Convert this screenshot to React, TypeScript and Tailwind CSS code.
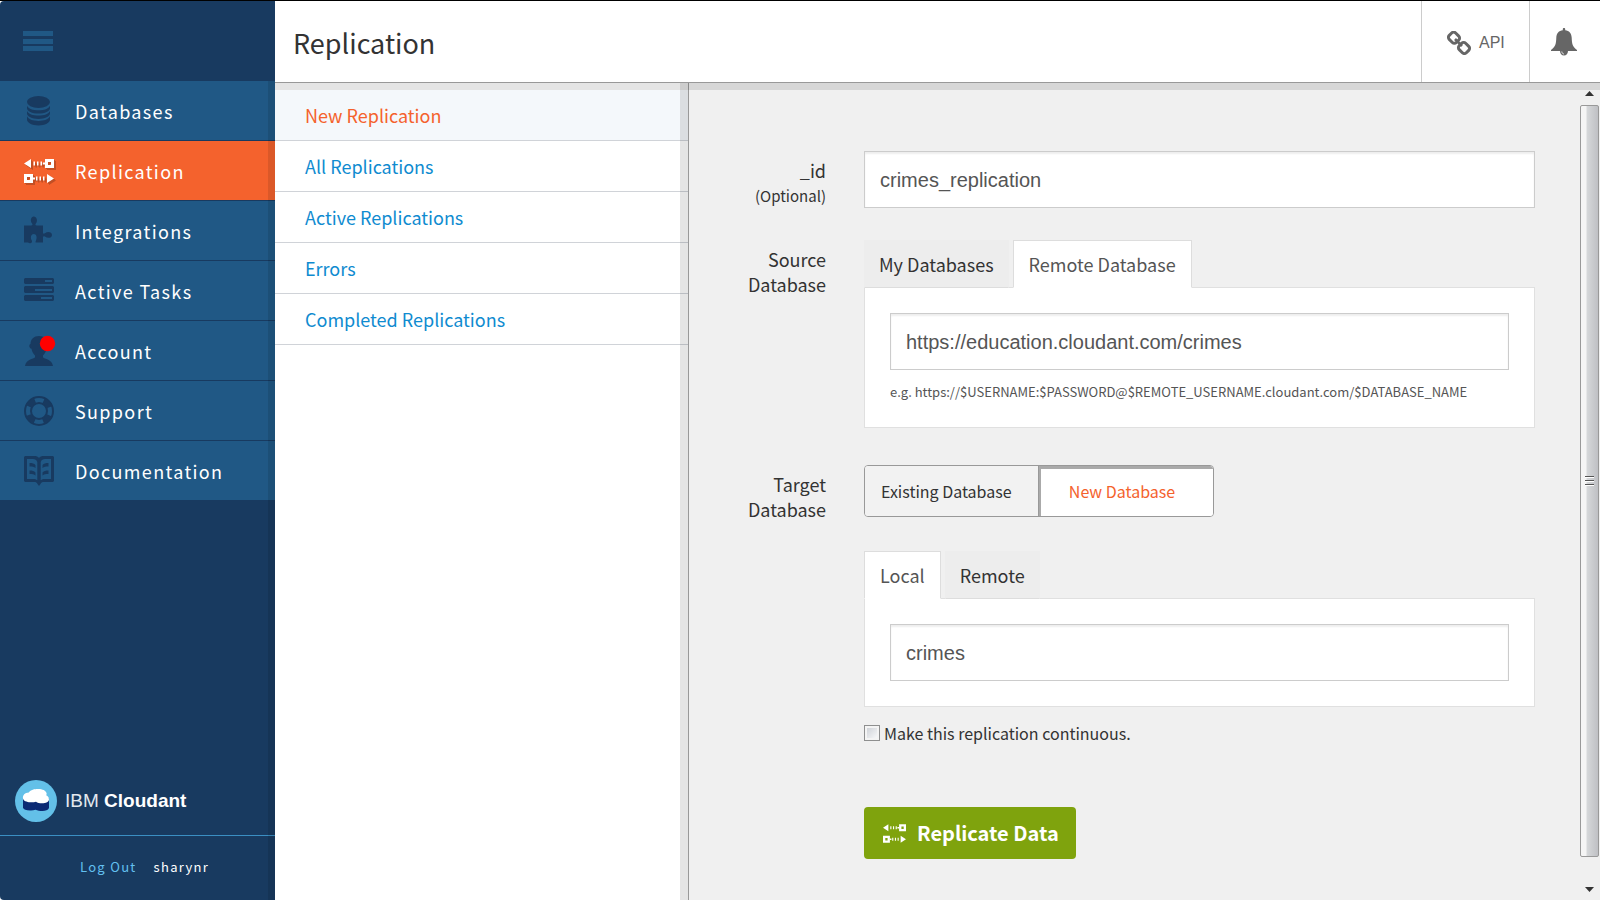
import { useState } from 'react';
import type { ReactNode } from 'react';

const inputClass =
  'block h-[57px] w-full border border-[#ccc] bg-white px-[15px] pt-[2px] font-["Liberation_Sans",sans-serif] text-[20px] text-[#555] shadow-[inset_0_2px_2px_rgba(0,0,0,0.07)] outline-none';

function MenuIcon() {
  return (
    <svg width="30" height="20" viewBox="0 0 30 20" fill="#205885" aria-hidden="true">
      <path d="M0 0h30v5H0zM0 8h30v5H0zM0 15h30v5H0z" />
    </svg>
  );
}

function DatabaseIcon() {
  return (
    <svg width="32" height="32" viewBox="0 0 32 32" fill="#183a60" aria-hidden="true">
      <ellipse cx="14.500" cy="7" rx="11.500" ry="6.100" />
      <path d="M3 10.700c1.400 3 5.800 4.600 11.500 4.600s10.100-1.600 11.500-4.600v2.200c0 3.300-5.100 5.700-11.500 5.700S3 16.200 3 12.900z" />
      <path d="M3 16c1.400 3 5.800 4.600 11.500 4.600S24.600 19 26 16v2.200c0 3.300-5.100 5.700-11.500 5.700S3 21.500 3 18.200z" />
      <path d="M3 21.300c1.400 3 5.800 4.600 11.500 4.600s10.100-1.600 11.500-4.600v3.300c0 3.300-5.100 5.900-11.500 5.900S3 27.900 3 24.600z" />
    </svg>
  );
}

function ReplicationGlyph() {
  return (
    <g>
      <path d="M0 4.500 7 0v9zM9.500 2.500h1.500v4H9.500zM13 2.500h1.500v4H13zM16.500 2.500H18v4h-1.500zM18.800 3.500H21v2h-2.200z" />
      <path fillRule="evenodd" d="M21 0h9v9h-9zM24 3v3h3V3z" />
      <path fillRule="evenodd" d="M0 15h9v9H0zM3 18v3h3v-3z" />
      <path d="M9 18.500h2v2H9zM12 17.500h1.500v4H12zM15.500 17.500H17v4h-1.500zM19 17.500h1.500v4H19zM23 15l7 4.500-7 4.500z" />
    </g>
  );
}

function ReplicationIcon() {
  return (
    <svg width="32" height="32" viewBox="0 0 32 32" aria-hidden="true">
      <g fill="#c34f24" transform="translate(2 6)"><ReplicationGlyph /></g>
      <g fill="#c34f24" transform="translate(1 5)"><ReplicationGlyph /></g>
      <g fill="#fff" transform="translate(0 4)"><ReplicationGlyph /></g>
    </svg>
  );
}

function PuzzleIcon() {
  return (
    <svg width="32" height="32" viewBox="0 0 32 32" fill="#183a60" aria-hidden="true">
      <path d="M0 10.500h7.200c1.300 0 1.600-.8.900-2C5.800 5.700 7 1.500 9.800 1.500s4.300 4.200 2.100 7c-.9 1.200-.5 2 .8 2H19v7c0 1.300.8 1.500 1.900.7 3-2.200 7.100-1.200 7.100 1.700s-4.100 4-7.100 1.700c-1.100-.8-1.900-.5-1.900.8v5.100h-6.500c-1.100 0-1.200-.8-.6-1.800C13.500 22 12.400 19 9.800 19s-3.800 3.500-2.100 6.200c.8 1.400.1 2.800-1.700 3-1.200.1-1.600-.7-2.800-.7H0z" />
    </svg>
  );
}

function TasksIcon() {
  return (
    <svg width="32" height="32" viewBox="0 0 32 32" fill="#183a60" aria-hidden="true">
      <path fillRule="evenodd" d="M1 3h28l1 1v4l-1 1H1L0 8V4zM21 5v2h7V5z" />
      <path fillRule="evenodd" d="M1 11h28l1 1v5l-1 1H1l-1-1v-5zM11 14v2h17v-2z" />
      <path fillRule="evenodd" d="M1 20h28l1 1v4l-1 1H1l-1-1v-4zM17 22v2h11v-2z" />
    </svg>
  );
}

function AccountIcon() {
  return (
    <svg width="32" height="32" viewBox="0 0 32 32" aria-hidden="true">
      <path
        fill="#183a60"
        d="M15 1c5 0 8 3 8 8 1.500.5 1.300 4-.5 4.800-.6 3.200-2 5.300-3.500 6.700v1.800c1.500 2 9 2 10 8.700H1c1-6.700 8.500-6.700 10-8.700v-1.800C9.500 19.100 8 17 7.500 13.800 4.800 13 4.800 9.500 6.500 9c0-5 3.500-8 8.500-8z"
      />
      <circle cx="23.500" cy="8.500" r="7.700" fill="#f00" />
    </svg>
  );
}

function SupportIcon() {
  return (
    <svg width="32" height="32" viewBox="0 0 32 32" fill="none" stroke="#183a60" aria-hidden="true">
      <circle cx="15" cy="16" r="14" strokeWidth="2" />
      <circle cx="15" cy="16" r="8" strokeWidth="2" />
      <circle cx="15" cy="16" r="11" strokeWidth="6" strokeDasharray="8.640 8.640" strokeDashoffset="-4.320" />
    </svg>
  );
}

function BookIcon() {
  return (
    <svg width="32" height="32" viewBox="0 0 32 32" aria-hidden="true">
      <path
        fill="#183a60"
        fillRule="evenodd"
        d="M1 1h9c2.500 0 4 .6 5 2 1-1.400 2.500-2 5-2h9l1 1v24l-1 1h-9c-2 0-2.800.5-3.500 2L15 31l-1.500-2c-.7-1.500-1.500-2-3.500-2H1l-1-1V2zM3 4v20h6c2 0 3.200.4 4.300 1.300V7C12.500 4.800 11 4 9 4zM27 4h-6c-2 0-3.500.8-4.300 3v18.300C17.800 24.400 19 24 21 24h6z"
      />
      <path fill="#183a60" d="M5.500 8c3 0 4.500.6 6 2v3c-1.500-1.200-3-1.500-6-1.500zM5.500 15.500c3 0 4.500.6 6 2v3c-1.500-1.200-3-1.500-6-1.500zM24.500 8c-3 0-4.500.6-6 2v3c1.500-1.200 3-1.500 6-1.500zM24.500 15.500c-3 0-4.500.6-6 2v3c1.500-1.200 3-1.500 6-1.500z" />
    </svg>
  );
}

function CloudantLogo() {
  return (
    <svg width="42" height="42" viewBox="0 0 42 42" aria-hidden="true">
      <circle cx="21" cy="21" r="21" fill="#63c0e8" />
      <path
        fill="#0b2a74"
        d="M8 18h26v10c-1 2.200-3.500 3-6.500 3-2.800 0-5-.4-7-1.200-1.700.6-3.500.8-5.500.7-3.800-.1-6.300-1-7-2.700z"
      />
      <path
        fill="#fff"
        d="M8 18.500c-.6-3.500 2-5.700 5.800-6C15.500 9.700 19.800 9 22.500 9c4.500-.2 8.500 1.500 9 4 .3.800 0 1.700-.3 2.200 1.800.7 2.800 2.300 2.800 4 0 2.600-3 4-7 4-2.500 0-4.600-.5-6-1.500-1.700.6-3.500.7-5.500.6-4-.2-7.200-1.500-7.500-3.800z"
      />
    </svg>
  );
}

function LinkIcon() {
  return (
    <svg width="24" height="24" viewBox="0 0 24 24" fill="none" stroke="#666" strokeWidth="3" aria-hidden="true">
      <rect x="2" y="2.200" width="10" height="9" rx="2.800" transform="rotate(45 7 6.700)" />
      <rect x="12" y="12.500" width="10" height="9" rx="2.800" transform="rotate(45 17 17)" />
      <path d="M8 8l7 7" strokeWidth="2.600" />
    </svg>
  );
}

function BellIcon() {
  return (
    <svg width="26" height="28" viewBox="0 0 26 28" aria-hidden="true">
      <path
        fill="#666"
        d="M13 0c.8 0 1.200.5 1.200 1.300v1c4 .3 6.300 3 6.500 7.500.2 6 .8 9.200 5.300 12.200v1H0v-1c4.500-3 5.100-6.200 5.300-12.200.2-4.500 2.500-7.200 6.500-7.500v-1C11.800.5 12.200 0 13 0z"
      />
      <path fill="#666" d="M9 23h8c0 2.600-1.600 4.500-4 4.500S9 25.600 9 23z" />
      <path d="M10.800 23.500c.1 1.500.9 2.400 2.200 2.500" fill="none" stroke="#fff" strokeWidth=".8" />
    </svg>
  );
}

type NavEntry = { label: string; icon: ReactNode; active?: boolean };

const navEntries: NavEntry[] = [
  { label: 'Databases', icon: <DatabaseIcon /> },
  { label: 'Replication', icon: <ReplicationIcon />, active: true },
  { label: 'Integrations', icon: <PuzzleIcon /> },
  { label: 'Active Tasks', icon: <TasksIcon /> },
  { label: 'Account', icon: <AccountIcon /> },
  { label: 'Support', icon: <SupportIcon /> },
  { label: 'Documentation', icon: <BookIcon /> },
];

function Sidebar() {
  return (
    <aside className="relative flex w-[275px] shrink-0 flex-col overflow-hidden rounded-l bg-[#183a60]">
      <div className="flex h-20 items-center pl-[23px]">
        <button type="button" aria-label="Toggle menu">
          <MenuIcon />
        </button>
      </div>
      <nav>
        {navEntries.map((entry) => (
          <a
            key={entry.label}
            href="#"
            className={`flex h-[60px] items-center gap-[19px] border-b border-[#183a60] pl-6 text-[18px] tracking-[0.075em] text-white ${
              entry.active ? 'bg-[#f4622d]' : 'bg-[#205885]'
            }`}
          >
            <span className="w-8 shrink-0">{entry.icon}</span>
            <span className="pt-px">{entry.label}</span>
          </a>
        ))}
      </nav>
      <div className="mt-auto flex items-center gap-2 pb-[13px] pl-[15px]">
        <CloudantLogo />
        <span className='font-["Liberation_Sans",sans-serif] text-[19px] text-white'>
          <span className="text-[#e3e8ee]">IBM</span> <b>Cloudant</b>
        </span>
      </div>
      <div className="flex h-[65px] items-center gap-[17px] border-t border-[#3b8fc3] pb-[2px] pl-20 text-[13px] tracking-widest">
        <a href="#" className="text-[#63c0f0]">Log Out</a>
        <span className="text-white">sharynr</span>
      </div>
      <div className="pointer-events-none absolute right-0 top-20 bottom-0 w-[7px] bg-black/10" />
    </aside>
  );
}

const listEntries = ['New Replication', 'All Replications', 'Active Replications', 'Errors', 'Completed Replications'];

function ReplicationList() {
  return (
    <nav className="relative w-[414px] shrink-0 border-r border-[#999] bg-white pt-[7px]">
      {listEntries.map((label, index) => (
        <a
          key={label}
          href="#"
          className={`flex h-[51px] items-center border-b border-[#d0d3d8] pl-[30px] text-[18px] ${
            index === 0 ? 'bg-[#f4f8fb] text-[#f4622d]' : 'text-[#0f8bd0]'
          }`}
        >
          {label}
        </a>
      ))}
      <div className="pointer-events-none absolute inset-y-0 right-0 w-2 bg-black/10" />
    </nav>
  );
}

function Tab({ label, active, onSelect }: { label: string; active: boolean; onSelect: () => void }) {
  return (
    <button
      type="button"
      role="tab"
      aria-selected={active}
      onClick={onSelect}
      className={`h-12 border text-[18px] ${
        active
          ? 'border-[#ddd] border-b-white bg-white px-[15px] text-[#555]'
          : 'border-[#ededed] border-b-[#ddd] bg-[#ededed] px-[14px] text-[#333]'
      }`}
    >
      {label}
    </button>
  );
}

function Tabs({ labels, initial }: { labels: string[]; initial: string }) {
  const [current, setCurrent] = useState(initial);
  return (
    <div role="tablist" className="relative -mb-px flex gap-1">
      {labels.map((label) => (
        <Tab key={label} label={label} active={label === current} onSelect={() => setCurrent(label)} />
      ))}
    </div>
  );
}

function Row({ label, children, className }: { label: ReactNode; children: ReactNode; className: string }) {
  return (
    <div className={`flex gap-[38px] ${className}`}>
      <div className="w-[137px] shrink-0 pt-[7px] text-right text-[18px] leading-[25px] text-[#333]">{label}</div>
      <div className="min-w-0 flex-1">{children}</div>
    </div>
  );
}

function ReplicationForm() {
  const [mode, setMode] = useState('new');
  return (
    <form className="min-w-0 flex-1 pt-[68px] pr-[45px]" onSubmit={(event) => event.preventDefault()}>
      <Row
        className="mb-8"
        label={
          <label htmlFor="replication-id" className="block">
            _id
            <span className="block text-[15px]">(Optional)</span>
          </label>
        }
      >
        <input id="replication-id" className={inputClass} defaultValue="crimes_replication" />
      </Row>

      <Row className="mb-[37px]" label={<label htmlFor="source-url">Source<br />Database</label>}>
        <Tabs labels={['My Databases', 'Remote Database']} initial="Remote Database" />
        <div className="h-[141px] border border-[#e0e0e0] bg-white px-[25px] pt-[25px]">
          <input id="source-url" className={inputClass} defaultValue="https://education.cloudant.com/crimes" />
          <p className="mt-[10px] text-[13px] leading-6 whitespace-nowrap text-[#555]">
            e.g. https://$USERNAME:$PASSWORD@$REMOTE_USERNAME.cloudant.com/$DATABASE_NAME
          </p>
        </div>
      </Row>

      <Row className="mb-[29px]" label={<label htmlFor="target-name">Target<br />Database</label>}>
        <div className="flex h-[52px] w-[350px] overflow-hidden rounded border border-[#999] text-[16px]">
          <button
            type="button"
            aria-pressed={mode === 'existing'}
            onClick={() => setMode('existing')}
            className="w-[174px] border-r border-[#999] bg-[#f2f2f2] pl-4 text-left text-[#333]"
          >
            Existing Database
          </button>
          <button
            type="button"
            aria-pressed={mode === 'new'}
            onClick={() => setMode('new')}
            className="flex-1 bg-white pr-2 text-[#f4622d] shadow-[inset_2px_3px_0_#aaa]"
          >
            New Database
          </button>
        </div>
      </Row>

      <Row className="mb-[18px]" label={null}>
        <Tabs labels={['Local', 'Remote']} initial="Local" />
        <div className="border border-[#e0e0e0] bg-white p-[25px]">
          <input id="target-name" className={inputClass} defaultValue="crimes" />
        </div>
      </Row>

      <Row className="" label={null}>
        <label className="flex h-4 items-center gap-1 text-[16px] text-[#333]">
          <input
            type="checkbox"
            className="size-4 appearance-none border border-[#8e8f8f] bg-linear-to-br from-[#c8ccd2] to-white shadow-[inset_0_0_0_2px_#f4f4f4]"
          />
          Make this replication continuous.
        </label>
        <button
          type="submit"
          className="mt-[66px] flex h-[52px] w-[212px] items-center gap-[11px] rounded bg-[#7fa30d] pl-[19px] text-[20px] font-semibold whitespace-nowrap text-white"
        >
          <svg width="23" height="19" viewBox="0 0 30 24" fill="#fff" aria-hidden="true">
            <ReplicationGlyph />
          </svg>
          Replicate Data
        </button>
      </Row>
    </form>
  );
}

function ScrollTrack() {
  return (
    <div className="flex w-5 shrink-0 flex-col bg-[#f0f0f0]" aria-hidden="true">
      <svg className="mt-2 ml-[5px] shrink-0" width="9" height="5" viewBox="0 0 9 5" fill="#333">
        <path d="M4.500 0 9 5H0z" />
      </svg>
      <div className="mt-[9px] flex w-[19px] flex-1 flex-col items-center justify-center gap-[2px] rounded-xs border border-[#999] bg-linear-to-r from-[#f5f5f5] from-30% via-[#d6d8da] via-35% to-[#bfc0c4]">
        <span className="h-[2px] w-[9px] border-t border-[#555] bg-white" />
        <span className="h-[2px] w-[9px] border-t border-[#555] bg-white" />
        <span className="h-[2px] w-[9px] border-t border-[#555] bg-white" />
      </div>
      <svg className="mt-[30px] mb-2 ml-[5px] shrink-0" width="9" height="5" viewBox="0 0 9 5" fill="#333">
        <path d="M0 0h9L4.500 5z" />
      </svg>
    </div>
  );
}

export default function App() {
  return (
    <div className='flex min-h-screen border-t border-black bg-white font-["Noto_Sans_CJK_SC",sans-serif]'>
      <Sidebar />
      <div className="flex min-w-0 flex-1 flex-col">
        <header className="flex h-[82px] shrink-0 border-b border-[#999]">
          <h1 className="flex flex-1 items-center pt-1 pl-[18px] text-[27px] text-[#333]">Replication</h1>
          <a
            href="#"
            className='flex w-[108px] items-center gap-2 border-l border-[#ccc] pt-[3px] pl-[25px] font-["Liberation_Sans",sans-serif] text-[16px] text-[#666]'
          >
            <LinkIcon />
            API
          </a>
          <button type="button" aria-label="Notifications" className="flex w-[71px] items-center border-l border-[#ccc] pl-[21px]">
            <BellIcon />
          </button>
        </header>
        <main className="relative flex flex-1 bg-[#f0f0f0]">
          <ReplicationList />
          <ReplicationForm />
          <ScrollTrack />
          <div className="pointer-events-none absolute inset-x-0 top-0 h-[7px] bg-black/10" />
        </main>
      </div>
    </div>
  );
}
